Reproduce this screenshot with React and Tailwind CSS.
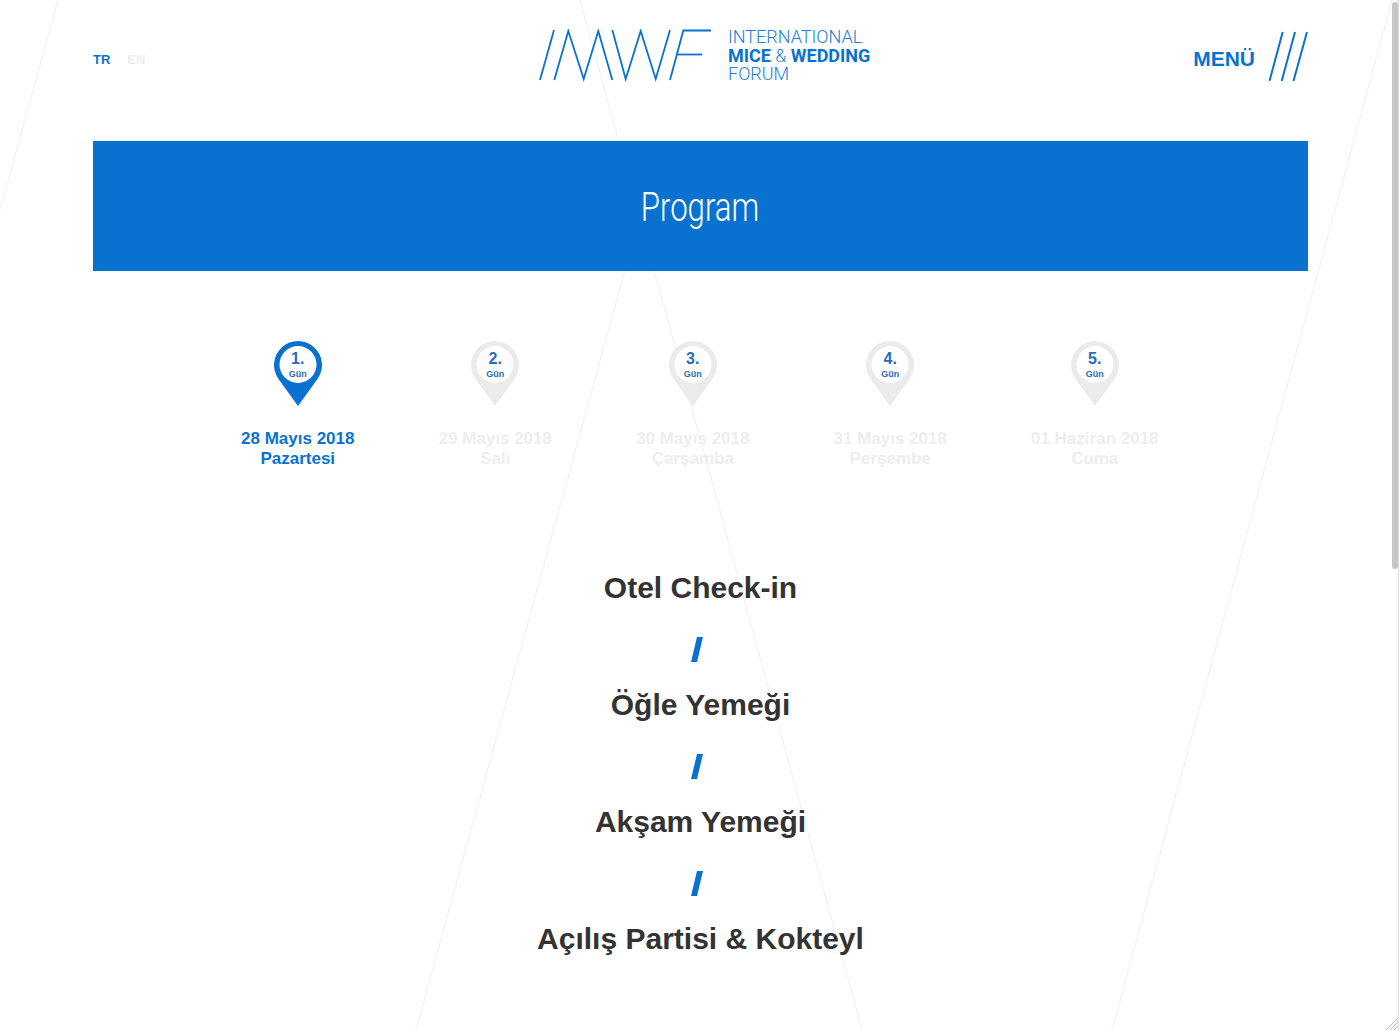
const BLUE = '#0972d1';

const days = [
  { n: '1.', date: '28 Mayıs 2018', name: 'Pazartesi', active: true },
  { n: '2.', date: '29 Mayıs 2018', name: 'Salı' },
  { n: '3.', date: '30 Mayıs 2018', name: 'Çarşamba' },
  { n: '4.', date: '31 Mayıs 2018', name: 'Perşembe' },
  { n: '5.', date: '01 Haziran 2018', name: 'Cuma' },
];

const events = ['Otel Check-in', 'Öğle Yemeği', 'Akşam Yemeği', 'Açılış Partisi & Kokteyl'];

function Pin({ active, n }) {
  const fill = active ? '#0972d1' : '#ebebeb';
  return (
    <div className="relative w-[48px] h-[65px]">
      <svg width="48" height="65" viewBox="0 0 48 65" className="block">
        <path d="M24 65 L4.5 38 A24 24 0 1 1 43.5 38 Z" fill={fill} />
        <circle cx="24" cy="23.5" r="18.5" fill="#fff" />
      </svg>
      <div className="absolute top-[9px] left-0 w-full text-center text-[#2a6cb8]">
        <div className="text-[16px] leading-[17px] font-bold">{n}</div>
        <div className="text-[9px] leading-[15px] font-bold">Gün</div>
      </div>
    </div>
  );
}

export default function App() {
  return (
    <div className="relative h-[1030px] overflow-hidden bg-white font-['Liberation_Sans',Arial,sans-serif]">
      {/* diagonal lines behind the page */}
      <svg className="absolute inset-0" width="1400" height="1030">
        <g stroke="#efefef" strokeWidth="1" fill="none">
          <line x1="58" y1="0" x2="0" y2="210" />
          <line x1="580" y1="0" x2="862" y2="1030" />
          <line x1="625" y1="270" x2="416" y2="1030" />
          <line x1="1392" y1="0" x2="1112" y2="1030" />
        </g>
      </svg>

      {/* scrollbar */}
      <div className="absolute right-[2px] top-[2px] w-[6px] h-[567px] rounded-[3px] bg-[#c6c6c6]" />
      <div className="absolute right-[1px] top-0 bottom-0 w-px bg-[#dcdcdc]" />
      <svg className="absolute right-[2px] bottom-0" width="12" height="12" stroke="#bbb">
        <line x1="0" y1="12" x2="12" y2="0" />
        <line x1="4" y1="12" x2="12" y2="4" />
        <line x1="8" y1="12" x2="12" y2="8" />
      </svg>

      <div className="relative w-[1215px] ml-[93px]">
        {/* header */}
        <header className="relative h-[141px] flex items-start justify-between">
          <div className="flex gap-[17px] mt-[52px] text-[13px] leading-[15px] font-bold">
            <span style={{ color: BLUE }}>TR</span>
            <span className="text-[#eeeeee]">EN</span>
          </div>

          <div className="absolute left-[446px] top-[28px] flex items-start">
            <svg width="174" height="54" viewBox="0 0 174 54" fill="none" stroke={BLUE} strokeWidth="1.8" className="mt-[1px]">
              <path d="M1 51 L15 1" />
              <path d="M15.3 51 L29.3 2 L44.7 50 L59.3 2 L73.3 51" />
              <path d="M73.3 1 L86.7 50 L101.7 2 L116.7 50 L131 1" />
              <path d="M131 51 L144.3 1.5 H172" />
              <path d="M137.7 25.5 H163.3" />
            </svg>
            <div className="ml-[15px] text-[18px] leading-[18.5px] text-[#2680d6] font-['Roboto',sans-serif] font-light whitespace-nowrap">
              <div>INTERNATIONAL</div>
              <div><b className="font-bold" style={{ color: BLUE }}>MICE</b> &amp; <b className="font-bold" style={{ color: BLUE }}>WEDDING</b></div>
              <div>FORUM</div>
            </div>
          </div>

          <div className="flex items-start mt-[31px]">
            <span className="mt-[15px] text-[21px] leading-[26px] font-bold" style={{ color: BLUE }}>MENÜ</span>
            <svg width="39" height="50" viewBox="0 0 39 50" fill="none" stroke={BLUE} strokeWidth="2" className="ml-[14px]">
              <path d="M0.5 50 L13.7 1" />
              <path d="M12.7 50 L26 1" />
              <path d="M24.5 50 L38 1" />
            </svg>
          </div>
        </header>

        {/* title */}
        <div className="h-[130px] pt-[3px] pr-[2px] flex items-center justify-center" style={{ background: BLUE }}>
          <h1 className="text-[40px] leading-[48px] text-white font-['Roboto',sans-serif] font-light scale-x-[0.78]">Program</h1>
        </div>

        {/* days */}
        <div className="flex mt-[70px] ml-[106px]">
          {days.map((d) => (
            <div key={d.n} className="w-[197.5px] flex flex-col items-center last:ml-[7px]">
              <Pin active={d.active} n={d.n} />
              <div className={`mt-[23px] text-[17px] leading-[20px] font-bold text-center whitespace-nowrap ${d.active ? 'text-[#0972d1]' : 'text-[#eeeeee]'}`}>
                <div>{d.date}</div>
                <div>{d.name}</div>
              </div>
            </div>
          ))}
        </div>

        {/* events */}
        <div className="mt-[106px] flex flex-col items-center">
          {events.map((e, i) => (
            <div key={e} className="flex flex-col items-center">
              {i > 0 && (
                <svg width="12" height="25" viewBox="0 0 12 25" className="mt-[37px] mb-[30px] -ml-[7px]">
                  <path d="M6 0 H12 L6 25 H0 Z" fill={BLUE} />
                </svg>
              )}
              <div className="text-[30px] leading-[25px] font-bold text-[#333333] whitespace-nowrap">{e}</div>
            </div>
          ))}
        </div>
      </div>
    </div>
  );
}
